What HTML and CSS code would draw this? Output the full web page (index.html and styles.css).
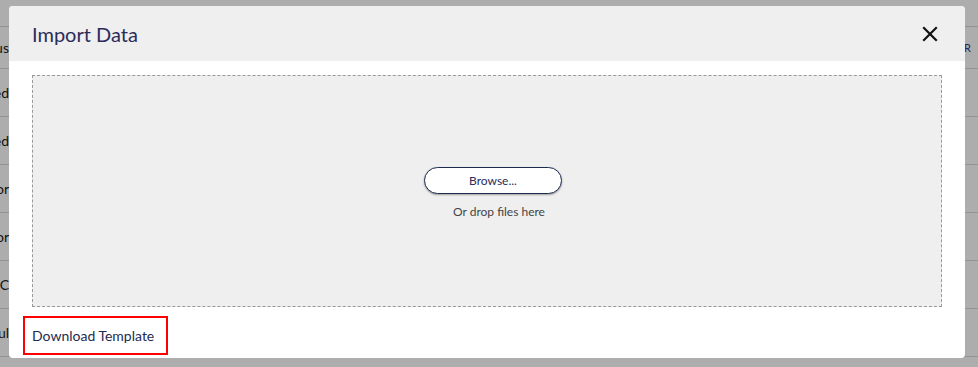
FILE: index.html
```html
<!DOCTYPE html>
<html lang="en">
<head>
  <meta charset="UTF-8" />
  <meta name="viewport" content="width=device-width, initial-scale=1.0" />
  <title>Import Data</title>
  <link rel="stylesheet" href="styles.css">
</head>
<body>
  <div class="page">
    <div class="table">
      <div class="row top"></div>
      <div class="row head"><span class="cell-left">Status</span><span class="cell-right">R</span></div>
      <div class="row"><span class="cell-left">Approved</span></div>
      <div class="row"><span class="cell-left">Approved</span></div>
      <div class="row"><span class="cell-left">Pending Approvor</span></div>
      <div class="row"><span class="cell-left">Pending Approvor</span></div>
      <div class="row"><span class="cell-left">DOC</span></div>
      <div class="row"><span class="cell-left">Fail ul</span></div>
    </div>
  </div>

  <div class="overlay">
    <div class="modal">
      <div class="modal-header">
        <h2>Import Data</h2>
        <button class="close" aria-label="Close">
          <svg width="16" height="16" viewBox="0 0 16 16"><path d="M2 2 L14 14 M14 2 L2 14" stroke="#111" stroke-width="2.2" stroke-linecap="square"/></svg>
        </button>
      </div>
      <div class="modal-body">
        <div class="dropzone">
          <button class="browse">Browse...</button>
          <span class="hint">Or drop files here</span>
        </div>
        <a class="download" href="#">Download Template</a>
      </div>
    </div>
  </div>
</body>
</html>
```

FILE: styles.css
```css
body {
  margin: 0;
  font-family: Lato, "Liberation Sans", sans-serif;
  background: #fff;
  overflow: hidden;
}
.page {
  height: 367px;
}
.row {
  height: 47px;
  border-bottom: 1px solid #d8d8d8;
  display: flex;
  align-items: center;
  justify-content: space-between;
  font-size: 14px;
  color: #222;
}
.row.top {
  height: 26px;
}
.row.head {
  height: 41px;
}
.cell-left {
  margin-left: -50px;
  white-space: nowrap;
  width: 59px;
  text-align: right;
  overflow: hidden;
  direction: rtl;
}
.cell-right {
  margin-right: 7px;
  color: #2a3a8a;
  font-size: 11px;
}
.overlay {
  position: fixed;
  inset: 0;
  background: rgba(0, 0, 0, 0.32);
  padding: 6px 13px 0 9px;
}
.modal {
  background: #fff;
  border-radius: 4px;
  overflow: hidden;
  height: 352px;
}
.modal-header {
  background: #efefef;
  height: 55px;
  display: flex;
  align-items: center;
  justify-content: space-between;
  padding: 0 27px 0 23px;
}
.modal-header h2 {
  margin: 0;
  font-size: 20px;
  font-weight: normal;
  color: #2b2c5a;
}
.close {
  border: none;
  background: none;
  padding: 0;
  width: 16px;
  height: 16px;
  cursor: pointer;
}
.modal-body {
  padding: 14px 23px 0 23px;
  display: flex;
  flex-direction: column;
}
.dropzone {
  height: 232px;
  border: 1px dashed #999;
  background: #efefef;
  display: flex;
  flex-direction: column;
  align-items: center;
  justify-content: center;
  gap: 10px;
  padding: 4px 0 0 12px;
  box-sizing: border-box;
}
.browse {
  width: 138px;
  height: 27px;
  border: 1px solid #1d2b4f;
  border-radius: 14px;
  background: #fff;
  box-shadow: 0 1px 2px rgba(0,0,0,0.35);
  font-family: Lato, "Liberation Sans", sans-serif;
  font-size: 12px;
  color: #2b2c5a;
  cursor: pointer;
}
.hint {
  font-size: 12px;
  color: #444;
  margin-left: 12px;
}
.download {
  align-self: flex-start;
  margin: 9px 0 0 -9px;
  padding: 0 12px 0 7px;
  height: 39px;
  line-height: 35px;
  box-sizing: border-box;
  border: 2px solid #f00;
  font-size: 14px;
  color: #1d2b4f;
  text-decoration: none;
}
```
